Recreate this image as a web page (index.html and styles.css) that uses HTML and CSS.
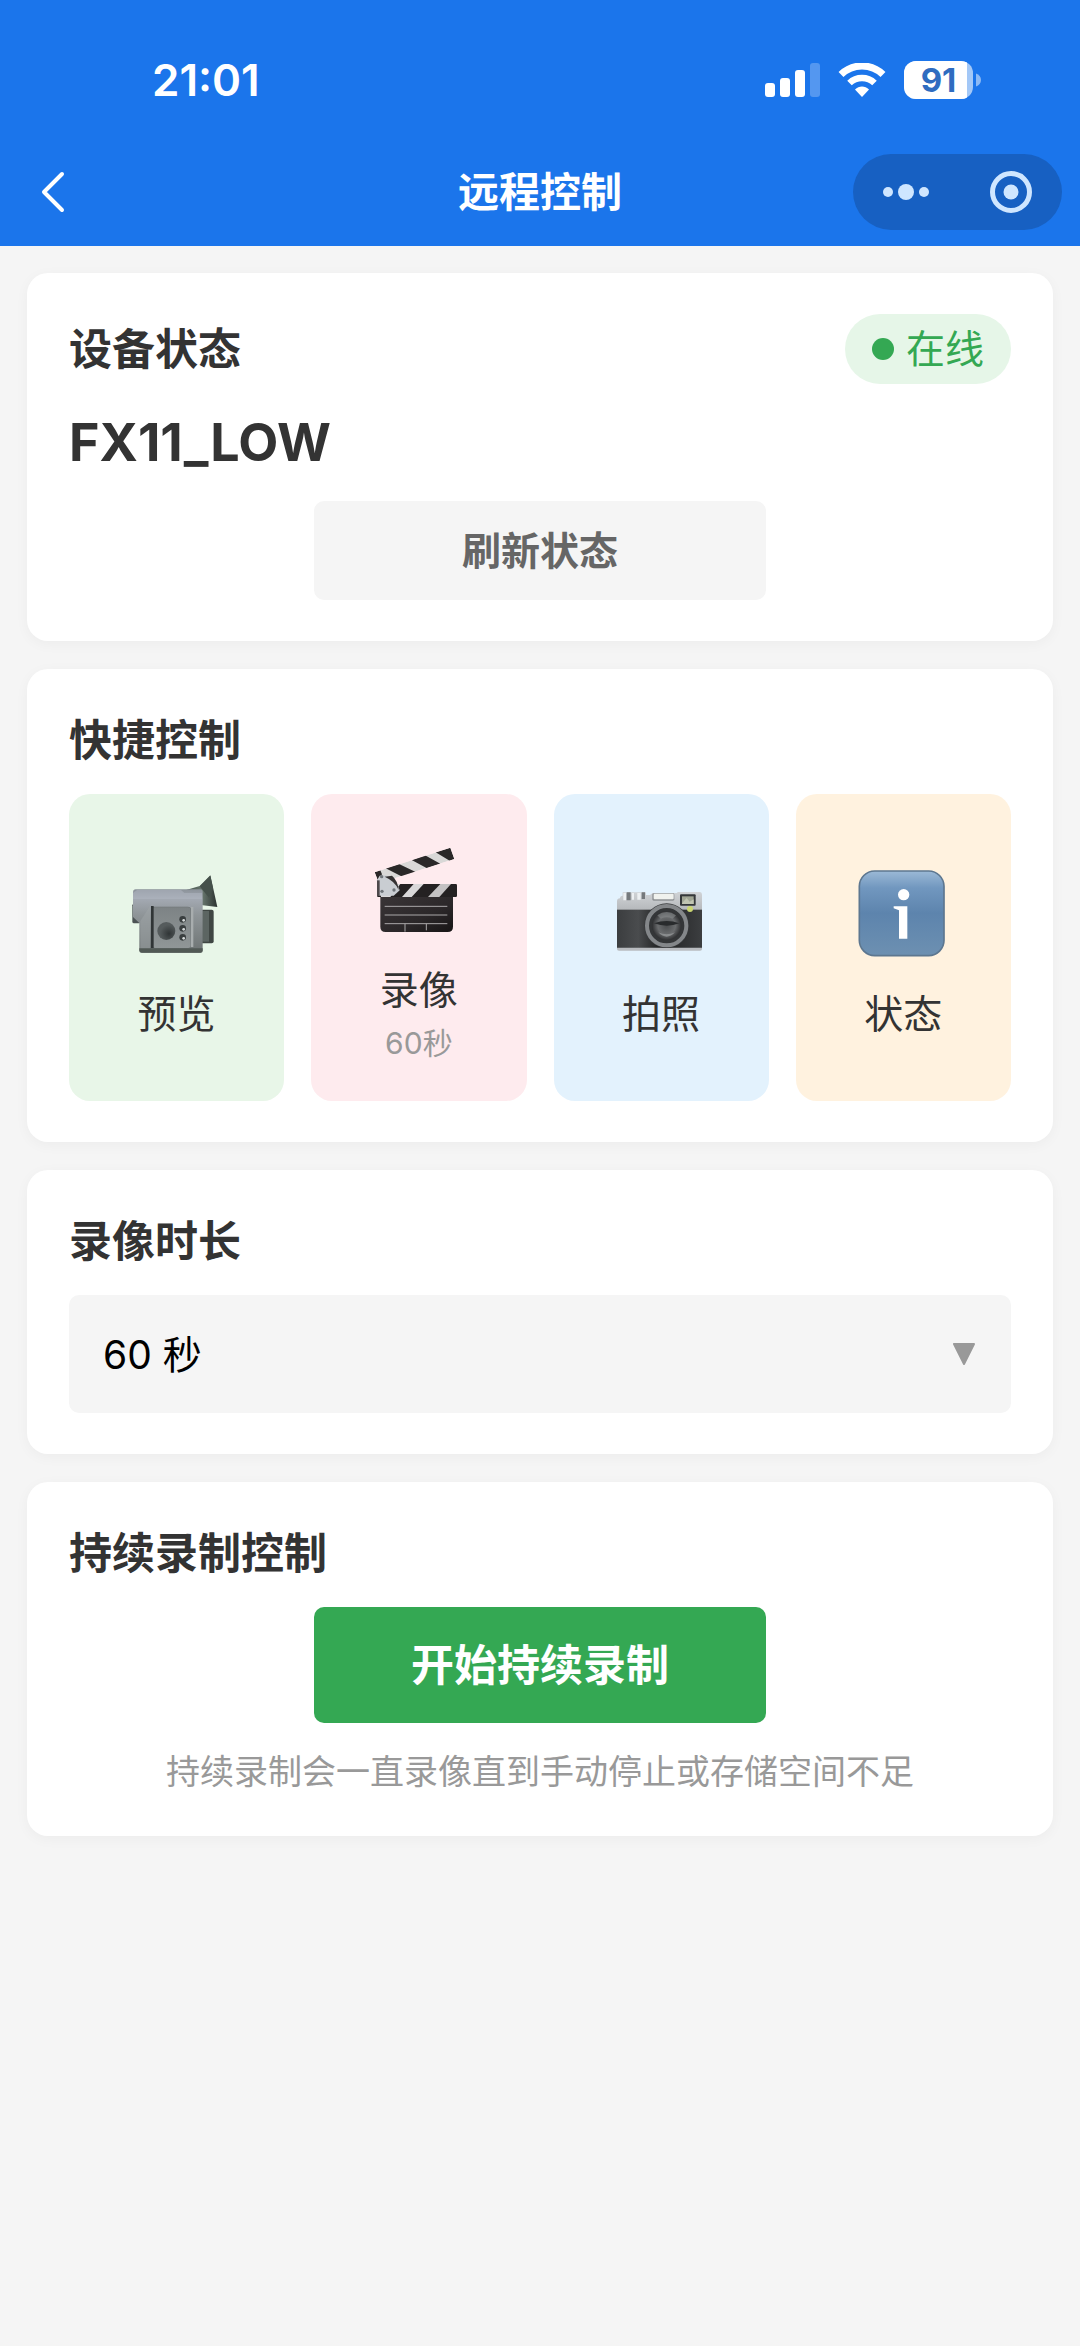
FILE: index.html
```html
<!DOCTYPE html>
<html lang="zh-CN">
<head>
<meta charset="utf-8">
<meta name="viewport" content="width=device-width, initial-scale=1">
<title>远程控制</title>
<link rel="stylesheet" href="styles.css">
</head>
<body>
<header class="header">
  <div class="status-bar">
    <time class="clock">21:01</time>
    <div class="indicators">
      <svg width="55" height="34" viewBox="0 0 55 34" fill="#fff" aria-hidden="true">
        <rect x="0" y="20" width="10" height="14" rx="3"/>
        <rect x="15" y="15" width="10" height="19" rx="3"/>
        <rect x="30" y="7" width="10" height="27" rx="3"/>
        <rect x="45" y="0" width="10" height="34" rx="3" opacity=".25"/>
      </svg>
      <svg width="48" height="34" viewBox="0 0 48 34" fill="none" stroke="#fff" aria-hidden="true">
        <path d="M3 11.500a30 30 0 0 1 42 0" stroke-width="7"/>
        <path d="M11.500 20a18 18 0 0 1 25 0" stroke-width="6.500"/>
        <path d="M24 34l-7-7.500c4-4 10-4 14 0z" fill="#fff" stroke="none"/>
      </svg>
      <div class="battery">
        <svg width="78" height="38" viewBox="0 0 78 38" aria-hidden="true">
          <defs><clipPath id="level"><rect width="63" height="38"/></clipPath></defs>
          <rect width="69" height="38" rx="12" fill="#fff" opacity=".6"/>
          <rect width="69" height="38" rx="12" fill="#fff" clip-path="url(#level)"/>
          <path d="M72 12.500c3 1 5 3.500 5 6.500s-2 5.500-5 6.500z" fill="#fff" opacity=".5"/>
        </svg>
        <span class="battery-text">91</span>
      </div>
    </div>
  </div>
  <nav class="nav">
    <button class="back" type="button" aria-label="返回">
      <svg width="24" height="42" viewBox="0 0 24 42" fill="none" stroke="#fff" stroke-width="4" stroke-linecap="round" stroke-linejoin="round"><path d="M21 3L3 21l18 18"/></svg>
    </button>
    <h1 class="nav-title">远程控制</h1>
    <div class="capsule">
      <button type="button" aria-label="更多">
        <svg width="46" height="42" viewBox="0 0 46 42" fill="#cfe6ff"><circle cx="5" cy="21" r="5"/><circle cx="23" cy="21" r="8"/><circle cx="41" cy="21" r="5"/></svg>
      </button>
      <button type="button" aria-label="关闭">
        <svg width="42" height="42" viewBox="0 0 42 42"><circle cx="21" cy="21" r="18.500" fill="none" stroke="#cfe6ff" stroke-width="5"/><circle cx="21" cy="21" r="7.500" fill="#cfe6ff"/></svg>
      </button>
    </div>
  </nav>
</header>

<main class="content">
  <section class="card">
    <div class="card-head">
      <h2 class="head-title">设备状态</h2>
      <span class="badge"><i class="dot"></i>在线</span>
    </div>
    <p class="device">FX11_LOW</p>
    <button class="btn refresh" type="button">刷新状态</button>
  </section>

  <section class="card">
    <h2 class="card-title">快捷控制</h2>
    <div class="tiles">
      <button class="tile green" type="button">
        <svg class="icon" viewBox="71 57 258 258" aria-hidden="true">
          <defs>
            <linearGradient id="body" x1="0" y1="0" x2="0" y2="1"><stop offset="0" stop-color="#8b9299"/><stop offset=".15" stop-color="#a3a9b2"/><stop offset=".4" stop-color="#8f9598"/><stop offset="1" stop-color="#6d7373"/></linearGradient>
            <linearGradient id="panel" x1="0" y1="0" x2="0" y2="1"><stop offset="0" stop-color="#7d8385"/><stop offset="1" stop-color="#909697"/></linearGradient>
            <linearGradient id="horn" x1="0" y1="0" x2="1" y2="0"><stop offset="0" stop-color="#3c4543"/><stop offset=".6" stop-color="#66756c"/><stop offset="1" stop-color="#2b3230"/></linearGradient>
            <radialGradient id="knob" cx=".65" cy=".65"><stop offset="0" stop-color="#303536"/><stop offset="1" stop-color="#555b5c"/></radialGradient>
          </defs>
          <path d="M210 122l58-17 32-32 21 95-50-6-6-38z" fill="url(#horn)"/>
          <path d="M268 106l32-32 8 38-12 28z" fill="#45514b"/>
          <rect x="66" y="158" width="24" height="59" rx="5" fill="#4c5354"/>
          <rect x="268" y="176" width="42" height="101" rx="6" fill="#3f4643"/>
          <rect x="276" y="180" width="20" height="92" fill="#5c6562"/>
          <path d="M76 115H270q7 0 7 7V298q0 7-7 7H96q-9 0-9-9V216l-19-18V124q0-9 8-9z" fill="url(#body)"/>
          <path d="M80 117H212l10 9h53v18H68v-18z" fill="#b1b8c4" opacity=".5"/>
          <path d="M90 210v85h29V165z" fill="#a0a6a8" opacity=".5"/>
          <path d="M87 292h190v7q0 6-6 6H94q-7 0-7-6z" fill="#515955"/>
          <rect x="122" y="167" width="120" height="124" rx="10" fill="#6c7273"/>
          <rect x="127" y="169" width="114" height="122" rx="8" fill="url(#panel)"/>
          <path d="M122 165h8v126h-8z" fill="#303536"/>
          <path d="M242 168h7v120h-7z" fill="#a8adae"/>
          <circle cx="168" cy="240" r="27" fill="url(#knob)"/>
          <g fill="#393e3f"><circle cx="217" cy="205" r="10"/><circle cx="217" cy="232" r="10"/><circle cx="217" cy="259" r="10"/></g>
          <g fill="#d6dadb"><circle cx="220" cy="208" r="4"/><circle cx="220" cy="235" r="4"/><circle cx="220" cy="262" r="4"/></g>
        </svg>
        <span class="label">预览</span>
      </button>
      <button class="tile pink" type="button">
        <svg class="icon" viewBox="79 45 258 258" aria-hidden="true">
          <defs>
            <linearGradient id="slate" x1="0" y1="0" x2="1" y2="1"><stop offset="0" stop-color="#3a3537"/><stop offset=".6" stop-color="#2b2729"/><stop offset="1" stop-color="#171415"/></linearGradient>
            <clipPath id="arm"><path d="M75 124L302 50l12 34L88 157z"/></clipPath>
            <clipPath id="bar"><rect x="82" y="159" width="240" height="39" rx="4"/></clipPath>
          </defs>
          <g clip-path="url(#arm)">
            <path d="M75 124L302 50l12 34L88 157z" fill="#d9d8d7"/>
            <path d="M75 124l17-6 5 12-13 18zM108 112l40-13 50 24-40 14zM186 87l40-14 46 25-40 14zM258 64l44-14 12 34-14 5z" fill="#2a2828"/>
          </g>
          <path d="M92 197h218v90q0 16-16 16H108q-16 0-16-16z" fill="url(#slate)"/>
          <g clip-path="url(#bar)">
            <rect x="82" y="159" width="240" height="39" fill="#242122"/>
            <path d="M192 159h30l-36 39h-29zM140 159h12l-30 39H94v-39z" fill="#d9d8d9"/>
            <path d="M272 159h32l-35 39h-34z" fill="#c4c2c3"/>
          </g>
          <path d="M82 148l8-14q42-8 60 44l-18 16H82z" fill="#c9cdd2"/>
          <path d="M105 137q32 14 42 40-3-29-20-43z" fill="#353233"/>
          <path d="M82 148h8v47h-8z" fill="#4d484a"/>
          <g fill="#6f7479"><circle cx="96" cy="137" r="5"/><circle cx="97" cy="181" r="5"/><circle cx="133" cy="177" r="5"/></g>
          <path d="M105 226h188M105 252h188M105 278h188M166 278v24M230 278v20" stroke="#aaa8a9" stroke-width="3" fill="none"/>
        </svg>
        <span class="label">录像</span>
        <span class="sub">60秒</span>
      </button>
      <button class="tile blue" type="button">
        <svg class="icon" viewBox="54 27 258 258" aria-hidden="true">
          <defs>
            <linearGradient id="leather" x1="0" y1="0" x2="1" y2="0"><stop offset="0" stop-color="#3b3d3f"/><stop offset=".25" stop-color="#4a4c4e"/><stop offset=".5" stop-color="#1f2021"/><stop offset="1" stop-color="#3c3e40"/></linearGradient>
            <linearGradient id="top" x1="0" y1="0" x2="0" y2="1"><stop offset="0" stop-color="#d0d3d6"/><stop offset="1" stop-color="#b5b8bb"/></linearGradient>
            <radialGradient id="lens"><stop offset="0" stop-color="#4b4d4f"/><stop offset=".6" stop-color="#6a6c6e"/><stop offset="1" stop-color="#2f3032"/></radialGradient>
          </defs>
          <path d="M60 112q0-8 8-8V94h70v8h12l8-6h74v-3h68q6 0 6 8v46H51v-26q0-9 9-9z" fill="url(#top)"/>
          <rect x="51" y="146" width="255" height="118" fill="url(#leather)"/>
          <path d="M51 260h255v4q0 5-6 5H57q-6 0-6-5z" fill="#b9bcc0"/>
          <path d="M80 94h12v24H80zM125 94h10v20h-10z" fill="#75797c"/>
          <path d="M70 96h8v22h-8zM96 96h6v20h-6zM112 96h10v20h-10z" fill="#edf0f2"/>
          <rect x="157" y="97" width="66" height="22" rx="4" fill="#8f9295"/>
          <rect x="161" y="98" width="60" height="17" rx="3" fill="#f0f2ee"/>
          <rect x="240" y="100" width="47" height="34" rx="3" fill="#35383a"/>
          <rect x="246" y="106" width="35" height="23" fill="#a1a695"/>
          <path d="M246 127l14-16 9 11 12-7v14h-35z" fill="#c1c5b2"/>
          <circle cx="200" cy="194" r="67" fill="#3a3c3e"/>
          <circle cx="200" cy="194" r="59" fill="#343638" stroke="#84878a" stroke-width="12"/>
          <circle cx="200" cy="194" r="44" fill="url(#lens)"/>
          <path d="M162 187q38-14 76 0-37 14-76 0z" fill="#292b2d"/>
          <path d="M172 163q28-20 56 0l-10 10q-18-8-36 0z" fill="#898c8e" opacity=".6"/>
          <path d="M175 214q25 12 50 0-25 26-50 0z" fill="#9b9ea0" opacity=".7"/>
          <circle cx="270" cy="144" r="9" fill="#cbd672"/>
        </svg>
        <span class="label">拍照</span>
      </button>
      <button class="tile orange" type="button">
        <svg class="icon" viewBox="59 57 258 258" aria-hidden="true">
          <defs>
            <linearGradient id="glass" x1="0" y1="0" x2="0" y2="1"><stop offset="0" stop-color="#9bb9d6"/><stop offset=".2" stop-color="#7197bf"/><stop offset=".5" stop-color="#5d84ad"/><stop offset="1" stop-color="#6d90b1"/></linearGradient>
          </defs>
          <rect x="57" y="60" width="254" height="254" rx="46" fill="url(#glass)" stroke="#5d7790" stroke-width="5"/>
          <circle cx="190" cy="131" r="17" fill="#fff"/>
          <path d="M160 166h41v97h-25v-85l-16-6z" fill="#fff"/>
        </svg>
        <span class="label">状态</span>
      </button>
    </div>
  </section>

  <section class="card">
    <h2 class="card-title"><label for="duration">录像时长</label></h2>
    <div class="picker">
      <select id="duration" class="select">
        <option selected>60 秒</option>
      </select>
      <svg class="arrow" width="22" height="22" viewBox="0 0 22 22" fill="#999" stroke="#999" stroke-width="2" stroke-linejoin="round" aria-hidden="true"><path d="M1 1h20L11 21z"/></svg>
    </div>
  </section>

  <section class="card">
    <h2 class="card-title">持续录制控制</h2>
    <button class="btn start" type="button">开始持续录制</button>
    <p class="hint">持续录制会一直录像直到手动停止或存储空间不足</p>
  </section>
</main>
</body>
</html>
```

FILE: styles.css
```css
* {
  box-sizing: border-box;
}

body {
  margin: 0;
  min-height: 100vh;
  background: #f5f5f5;
  color: #333;
  font-family: Inter, "Noto Sans CJK SC", sans-serif;
}

h1,
h2,
p {
  margin: 0;
}

button,
select {
  margin: 0;
  padding: 0;
  border: 0;
  background: none;
  color: inherit;
  font: inherit;
}

svg {
  display: block;
}

/* Header */
.header {
  background: #1b75eb;
  color: #fff;
}

.status-bar {
  display: flex;
  justify-content: space-between;
  align-items: center;
  padding: 52px 98px 30px 152px;
}

.clock {
  font-size: 44px;
  font-weight: 600;
  line-height: 56px;
}

.indicators {
  display: flex;
  align-items: center;
  gap: 18px;
}

.battery {
  display: grid;
  align-items: center;
}

.battery > * {
  grid-area: 1 / 1;
}

.battery-text {
  width: 69px;
  color: #2f6cc0;
  font-size: 33px;
  font-weight: 700;
  line-height: 38px;
  text-align: center;
}

.nav {
  display: grid;
  grid-template-columns: 1fr auto 1fr;
  align-items: center;
  height: 108px;
  padding: 0 18px;
}

.back {
  justify-self: start;
  padding: 0 23px;
}

.nav-title {
  font-size: 41px;
  font-weight: 700;
  line-height: 60px;
}

.capsule {
  justify-self: end;
  display: flex;
  align-items: center;
  justify-content: space-between;
  width: 209px;
  height: 76px;
  padding: 0 30px;
  border-radius: 38px;
  background: #1760c2;
}

/* Cards */
.content {
  display: flex;
  flex-direction: column;
  gap: 28px;
  padding: 27px;
}

.card {
  padding: 41px 42px;
  border-radius: 21px;
  background: #fff;
  box-shadow: 0 3px 14px rgba(0, 0, 0, 0.04);
}

.card-head {
  display: flex;
  align-items: center;
  justify-content: space-between;
}

.head-title,
.card-title {
  font-size: 43px;
  font-weight: 700;
  line-height: 60px;
}

.card-title {
  margin-bottom: 24px;
}

.badge {
  display: flex;
  align-items: center;
  gap: 12px;
  height: 70px;
  padding: 0 27px;
  border-radius: 35px;
  background: #e6f6e8;
  color: #34a853;
  font-size: 39px;
  line-height: 46px;
}

.dot {
  width: 22px;
  height: 22px;
  border-radius: 50%;
  background: #34a853;
}

.device {
  margin: 28px 0;
  font-size: 52px;
  font-weight: 700;
  line-height: 61px;
}

.btn {
  display: block;
  width: 48%;
  margin: 0 auto;
  border-radius: 10px;
  font-weight: 700;
}

.refresh {
  height: 99px;
  background: #f5f5f5;
  color: #666;
  font-size: 39px;
  line-height: 46px;
}

.start {
  height: 116px;
  background: #34a853;
  color: #fff;
  font-size: 43px;
  line-height: 60px;
}

/* Quick controls */
.tiles {
  display: grid;
  grid-template-columns: repeat(4, 1fr);
  gap: 27px;
}

.tile {
  display: flex;
  flex-direction: column;
  align-items: center;
  justify-content: center;
  height: 307px;
  border-radius: 21px;
}

.green {
  background: #e8f6e8;
}

.pink {
  background: #feebee;
}

.blue {
  background: #e3f2fd;
}

.orange {
  background: #fff2df;
}

.icon {
  width: 86px;
  height: 86px;
  margin: 12px 0 35px;
  overflow: visible;
}

.label {
  font-size: 39px;
  line-height: 46px;
}

.sub {
  margin-top: 12px;
  color: #999;
  font-size: 30px;
  line-height: 36px;
}

/* Duration picker */
.picker {
  display: grid;
  align-items: center;
}

.select,
.arrow {
  grid-area: 1 / 1;
}

.select {
  appearance: none;
  width: 100%;
  height: 118px;
  padding: 0 34px;
  border-radius: 10px;
  background: #f5f5f5;
  color: #000;
  font-size: 39px;
}

.arrow {
  justify-self: end;
  margin-right: 36px;
  pointer-events: none;
}

.hint {
  margin-top: 26px;
  color: #999;
  font-size: 34px;
  line-height: 46px;
  text-align: center;
}
```
